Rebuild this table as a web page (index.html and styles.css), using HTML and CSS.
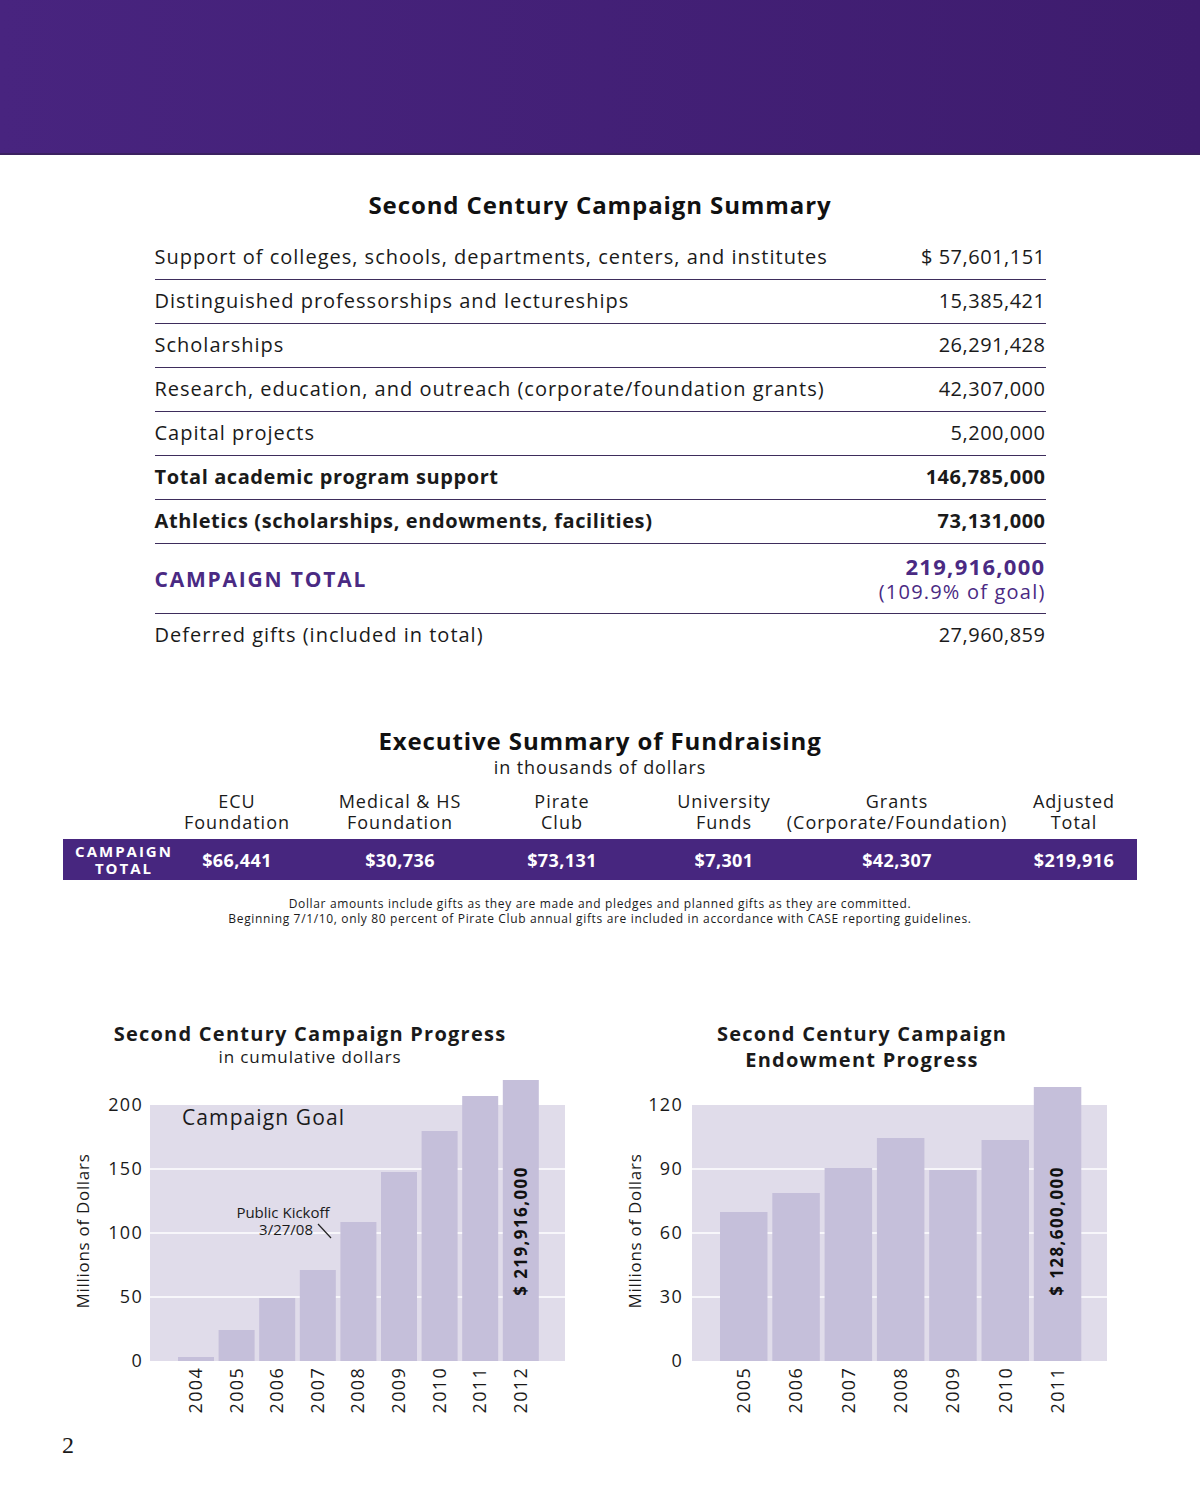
FILE: index.html
```html
<!DOCTYPE html>
<html lang="en">
<head>
<meta charset="utf-8">
<title>Second Century Campaign Summary</title>
<link rel="stylesheet" href="styles.css">
</head>
<body>
<header class="banner"></header>
<main class="page">
  <section class="summary">
    <h2 class="title">Second Century Campaign Summary</h2>
    <div class="rows">
      <div class="row"><span>Support of colleges, schools, departments, centers, and institutes</span><span class="num">$ 57,601,151</span></div>
      <div class="row"><span>Distinguished professorships and lectureships</span><span class="num">15,385,421</span></div>
      <div class="row"><span>Scholarships</span><span class="num">26,291,428</span></div>
      <div class="row"><span>Research, education, and outreach (corporate/foundation grants)</span><span class="num">42,307,000</span></div>
      <div class="row"><span>Capital projects</span><span class="num">5,200,000</span></div>
      <div class="row bold"><span>Total academic program support</span><span class="num">146,785,000</span></div>
      <div class="row bold"><span>Athletics (scholarships, endowments, facilities)</span><span class="num">73,131,000</span></div>
      <div class="row total"><span class="total-label">CAMPAIGN TOTAL</span><span class="total-value"><b>219,916,000</b><span>(109.9% of goal)</span></span></div>
      <div class="row last"><span>Deferred gifts (included in total)</span><span class="num">27,960,859</span></div>
    </div>
  </section>

  <section class="exec">
    <h2 class="title">Executive Summary of Fundraising</h2>
    <p class="sub">in thousands of dollars</p>
    <div class="exec-grid heads">
      <div class="cell"></div>
      <div class="cell"><span>ECU<br>Foundation</span></div>
      <div class="cell"><span>Medical &amp; HS<br>Foundation</span></div>
      <div class="cell"><span>Pirate<br>Club</span></div>
      <div class="cell"><span>University<br>Funds</span></div>
      <div class="cell"><span>Grants<br>(Corporate/Foundation)</span></div>
      <div class="cell adj"><span>Adjusted<br>Total</span></div>
    </div>
    <div class="exec-grid band">
      <div class="cell lab"><span>CAMPAIGN<br>TOTAL</span></div>
      <div class="cell"><span>$66,441</span></div>
      <div class="cell"><span>$30,736</span></div>
      <div class="cell"><span>$73,131</span></div>
      <div class="cell"><span>$7,301</span></div>
      <div class="cell"><span>$42,307</span></div>
      <div class="cell adj"><span>$219,916</span></div>
    </div>
    <p class="notes">Dollar amounts include gifts as they are made and pledges and planned gifts as they are committed.<br>Beginning 7/1/10, only 80 percent of Pirate Club annual gifts are included in accordance with CASE reporting guidelines.</p>
  </section>

  <section class="charts">
    <div class="chart left">
      <div class="chart-head">
        <h3>Second Century Campaign Progress</h3>
        <p>in cumulative dollars</p>
      </div>
      <svg class="plot" width="494" height="345" viewBox="0 0 494 345">
        <rect x="87" y="28" width="415" height="256" fill="#e0dcea"/>
        <g stroke="#ffffff" stroke-width="1.5">
          <line x1="87" y1="92" x2="502" y2="92"/>
          <line x1="87" y1="156" x2="502" y2="156"/>
          <line x1="87" y1="220" x2="502" y2="220"/>
        </g>
        <g fill="#c5bfda">
          <rect x="115" y="280" width="36" height="4"/>
          <rect x="155.6" y="253" width="36" height="31"/>
          <rect x="196.2" y="221" width="36" height="63"/>
          <rect x="236.8" y="193" width="36" height="91"/>
          <rect x="277.4" y="145" width="36" height="139"/>
          <rect x="318" y="95" width="36" height="189"/>
          <rect x="358.6" y="54" width="36" height="230"/>
          <rect x="399.2" y="19" width="36" height="265"/>
          <rect x="439.8" y="3" width="36" height="281"/>
        </g>
        <g class="ytick" text-anchor="end">
          <text x="80" y="34">200</text>
          <text x="80" y="98">150</text>
          <text x="80" y="162">100</text>
          <text x="80" y="226">50</text>
          <text x="80" y="290">0</text>
        </g>
        <text class="yaxis" transform="translate(26 154) rotate(-90)" text-anchor="middle">Millions of Dollars</text>
        <text class="goal" x="119" y="48">Campaign Goal</text>
        <text class="kick" x="220" y="141" text-anchor="middle">Public Kickoff</text>
        <text class="kick" x="250" y="158" text-anchor="end">3/27/08</text>
        <line x1="255" y1="147" x2="268" y2="161" stroke="#222" stroke-width="1.2"/>
        <text class="val" transform="translate(464 154) rotate(-90)" text-anchor="middle">$ 219,916,000</text>
        <g class="xtick" text-anchor="end">
          <text transform="translate(139 290) rotate(-90)">2004</text>
          <text transform="translate(179.6 290) rotate(-90)">2005</text>
          <text transform="translate(220.2 290) rotate(-90)">2006</text>
          <text transform="translate(260.8 290) rotate(-90)">2007</text>
          <text transform="translate(301.4 290) rotate(-90)">2008</text>
          <text transform="translate(342 290) rotate(-90)">2009</text>
          <text transform="translate(382.6 290) rotate(-90)">2010</text>
          <text transform="translate(423.2 290) rotate(-90)">2011</text>
          <text transform="translate(463.8 290) rotate(-90)">2012</text>
        </g>
      </svg>
    </div>
    <div class="chart right">
      <div class="chart-head">
        <h3>Second Century Campaign<br>Endowment Progress</h3>
      </div>
      <svg class="plot" width="504" height="345" viewBox="0 0 504 345">
        <rect x="82" y="28" width="415" height="256" fill="#e0dcea"/>
        <g stroke="#ffffff" stroke-width="1.5">
          <line x1="82" y1="92" x2="497" y2="92"/>
          <line x1="82" y1="156" x2="497" y2="156"/>
          <line x1="82" y1="220" x2="497" y2="220"/>
        </g>
        <g fill="#c5bfda">
          <rect x="110" y="135" width="47.5" height="149"/>
          <rect x="162.3" y="116" width="47.5" height="168"/>
          <rect x="214.6" y="91" width="47.5" height="193"/>
          <rect x="266.9" y="61" width="47.5" height="223"/>
          <rect x="319.2" y="93" width="47.5" height="191"/>
          <rect x="371.5" y="63" width="47.5" height="221"/>
          <rect x="423.8" y="10" width="47.5" height="274"/>
        </g>
        <g class="ytick" text-anchor="end">
          <text x="73" y="34">120</text>
          <text x="73" y="98">90</text>
          <text x="73" y="162">60</text>
          <text x="73" y="226">30</text>
          <text x="73" y="290">0</text>
        </g>
        <text class="yaxis" transform="translate(31 154) rotate(-90)" text-anchor="middle">Millions of Dollars</text>
        <text class="val" transform="translate(453 154) rotate(-90)" text-anchor="middle">$ 128,600,000</text>
        <g class="xtick" text-anchor="end">
          <text transform="translate(140 290) rotate(-90)">2005</text>
          <text transform="translate(192.3 290) rotate(-90)">2006</text>
          <text transform="translate(244.6 290) rotate(-90)">2007</text>
          <text transform="translate(296.9 290) rotate(-90)">2008</text>
          <text transform="translate(349.2 290) rotate(-90)">2009</text>
          <text transform="translate(401.5 290) rotate(-90)">2010</text>
          <text transform="translate(453.8 290) rotate(-90)">2011</text>
        </g>
      </svg>
    </div>
  </section>

  <div class="pageno">2</div>
</main>
</body>
</html>
```
FILE: styles.css
```css
* { box-sizing: border-box; }
html, body { margin: 0; padding: 0; background: #ffffff; }
body {
  font-family: "Open Sans", "Liberation Sans", sans-serif;
  color: #1a1a1a;
}
.banner {
  height: 155px;
  background: linear-gradient(to right, #48247f, #3e1c6e);
  border-bottom: 2px solid #3b2160;
}
.page { width: 1200px; }
.title {
  margin: 0;
  text-align: center;
  font-size: 24px;
  line-height: 30px;
  font-weight: 700;
  letter-spacing: 0.9px;
  color: #111;
}
.summary { width: 891px; margin: 35px auto 0; }
.summary .title { margin-bottom: 16px; }
.row {
  display: flex;
  justify-content: space-between;
  align-items: center;
  height: 44px;
  border-bottom: 1px solid #3e2d5c;
  font-size: 20px;
  letter-spacing: 1px;
  padding-bottom: 2px;
}
.row .num { letter-spacing: 0.5px; }
.row.bold { font-weight: 700; letter-spacing: 0.6px; }
.row.total { height: 70px; padding-bottom: 0; }
.row.last { border-bottom: none; padding-bottom: 4px; }
.total-label { color: #4a2a83; font-weight: 700; font-size: 21px; letter-spacing: 1.8px; }
.total-value {
  display: flex;
  flex-direction: column;
  align-items: flex-end;
  color: #4a2a83;
  line-height: 25px;
  letter-spacing: 1.2px;
}
.total-value b { font-size: 22px; font-weight: 700; letter-spacing: 1.3px; }

.exec { margin-top: 68px; }
.sub {
  margin: 0;
  text-align: center;
  font-size: 18px;
  line-height: 22px;
  letter-spacing: 0.9px;
}
.exec-grid {
  width: 1074px;
  margin: 0 auto;
  display: grid;
  grid-template-columns: 122px 104px 222px 102px 222px 124px 178px;
}
.cell {
  display: flex;
  justify-content: center;
  align-items: center;
  text-align: center;
  white-space: nowrap;
}
.cell.adj { padding-left: 52px; }
.heads {
  margin-top: 13px;
  font-size: 18px;
  line-height: 21px;
  font-weight: 500;
  letter-spacing: 1px;
  height: 48px;
  align-items: start;
}
.band {
  height: 41px;
  background: #47267f;
  color: #fff;
  font-weight: 700;
  font-size: 18px;
  letter-spacing: 0.4px;
}
.band .lab { font-size: 15px; line-height: 17px; letter-spacing: 2px; }
.notes {
  margin: 16px 0 0;
  text-align: center;
  font-size: 12px;
  line-height: 15px;
  letter-spacing: 0.65px;
}

.charts {
  display: flex;
  margin-top: 95px;
}
.chart.left { width: 494px; margin-left: 63px; }
.chart.right { width: 504px; margin-left: 53px; }
.chart-head { height: 56px; text-align: center; }
.chart-head h3 {
  margin: 0;
  font-size: 20px;
  line-height: 26px;
  font-weight: 700;
  letter-spacing: 1.25px;
}
.chart-head p { margin: 0; font-size: 17px; line-height: 20px; letter-spacing: 0.9px; }
.plot { display: block; overflow: visible; font-family: "Open Sans", "Liberation Sans", sans-serif; }
.ytick text, .xtick text { font-size: 18px; letter-spacing: 1.3px; fill: #1a1a1a; }
.yaxis { font-size: 17px; letter-spacing: 0.7px; fill: #1a1a1a; }
.goal { font-size: 21px; letter-spacing: 1.1px; fill: #1a1a1a; }
.kick { font-size: 15px; fill: #1a1a1a; }
.val { font-size: 17px; font-weight: 700; letter-spacing: 1.4px; fill: #111; }

.pageno {
  margin: 8px 0 0 62px;
  font-family: "Liberation Serif", serif;
  font-size: 24px;
  line-height: 30px;
}
```
